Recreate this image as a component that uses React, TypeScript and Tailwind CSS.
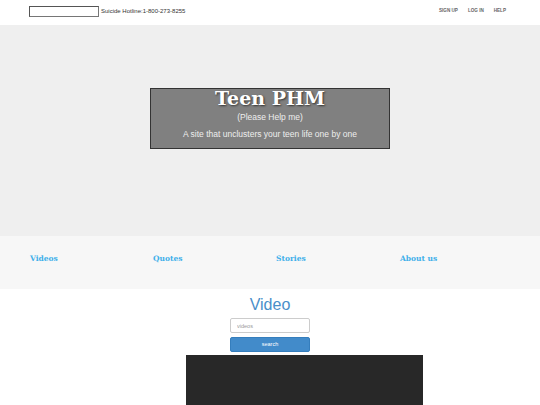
export default function App() {
	const links = ["Videos", "Quotes", "Stories", "About us"];

	return (
		<div className="w-[540px] h-[405px] overflow-hidden bg-white font-['Liberation_Sans',Arial,sans-serif]">
			<header className="h-[25px] flex items-center px-[29px] pb-[3px]">
				<input className="w-[70px] h-[11px] border border-[#767676] border-t-[#555] border-l-[#555] bg-white" />
				<span className="ml-[2px] text-[6px] text-[#333]">Suicide Hotline:1-800-273-8255</span>
				<nav className="ml-auto mr-[5px] flex gap-[10px] text-[4.6px] font-bold text-[#666]">
					<span>SIGN UP</span>
					<span>LOG IN</span>
					<span>HELP</span>
				</nav>
			</header>

			<section className="h-[211px] bg-[#efefef] flex justify-center pt-[63px]">
				<div className="w-[240px] h-[61px] bg-[#808080] border border-[#333] flex flex-col items-center text-white">
					<h1 className="font-['DejaVu_Serif',serif] font-bold text-[19px] leading-[20px] mt-[-1px] [text-shadow:1px_1px_2px_#333]">Teen PHM</h1>
					<p className="text-[8.5px] mt-[3px] text-[#eee]">(Please Help me)</p>
					<p className="text-[8.5px] mt-[4px] text-[#eee]">A site that unclusters your teen life one by one</p>
				</div>
			</section>

			<section className="h-[53px] bg-[#f7f7f7] grid grid-cols-[123px_123px_124px_1fr] pl-[30px] items-start pt-[17px]">
				{links.map((l) => (
					<a key={l} className="font-['DejaVu_Serif',serif] font-bold text-[7.5px] text-[#3fb0ea]">
						{l}
					</a>
				))}
			</section>

			<main className="flex flex-col items-center">
				<h2 className="mt-[6px] text-[16px] leading-[19px] text-[#4a8fc9]">Video</h2>
				<input
					placeholder="videos"
					className="mt-[4px] w-[80px] h-[15px] rounded-[2px] border border-[#ccc] px-[6px] text-[5.5px] placeholder:text-[#999]"
				/>
				<button className="mt-[4px] w-[80px] h-[15px] rounded-[2px] bg-[#428bca] border border-[#357ebd] text-white text-[5.5px]">
					search
				</button>
				<div className="mt-[3px] self-start ml-[186px] w-[237px] h-[60px] bg-[#282828]" />
			</main>
		</div>
	);
}
